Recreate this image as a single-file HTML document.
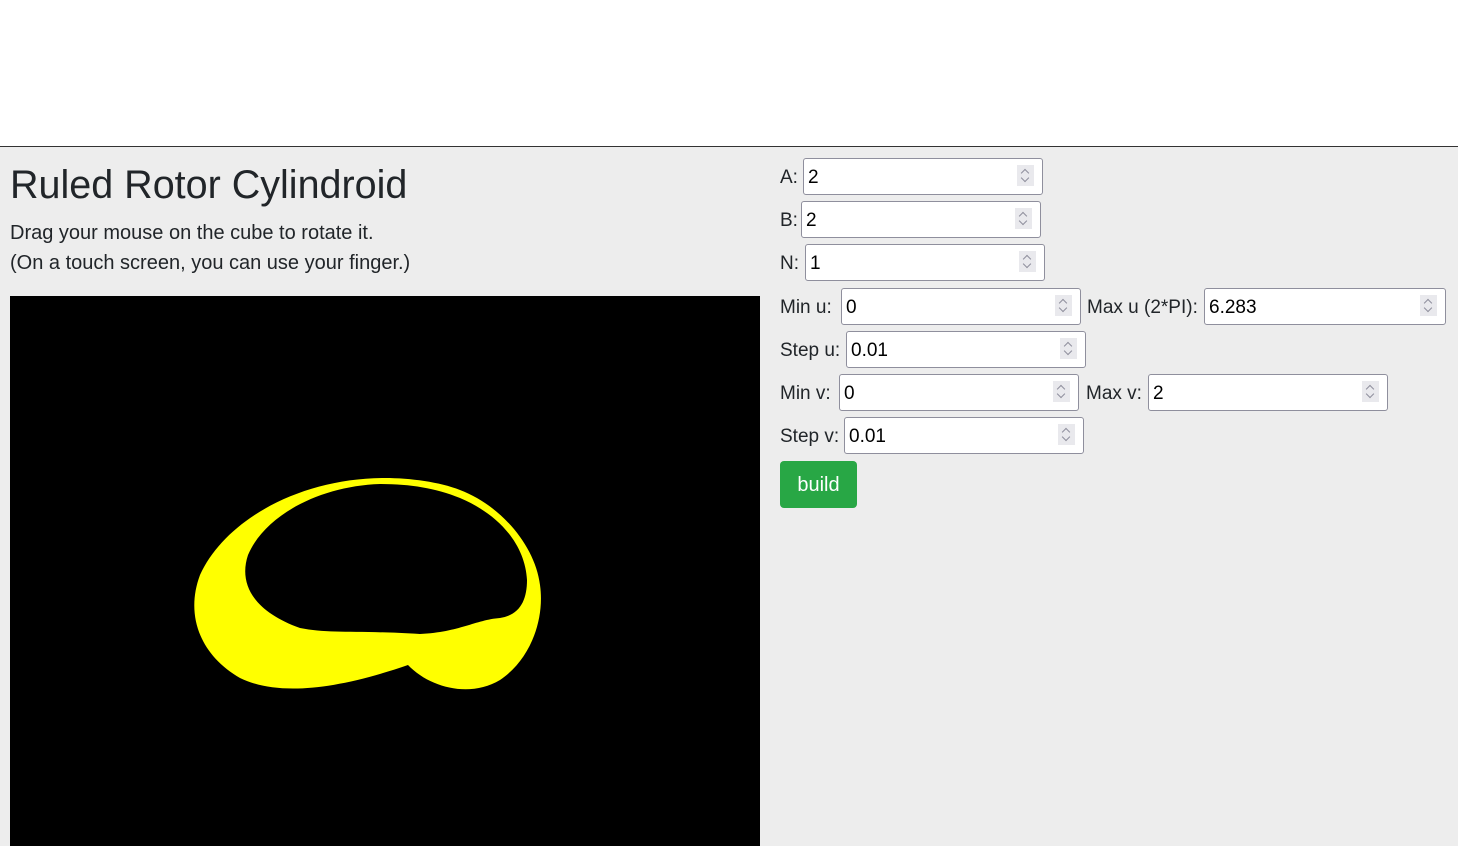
<!DOCTYPE html>
<html><head><meta charset="utf-8"><style>
*{margin:0;padding:0;box-sizing:border-box}
body{width:1458px;height:846px;overflow:hidden;background:#ededed;font-family:"Liberation Sans",sans-serif;color:#212529;position:relative}
.top{position:absolute;left:0;top:0;width:1458px;height:147px;background:#fff;border-bottom:1px solid #333}
.a{position:absolute;white-space:nowrap}
h1{position:absolute;left:10px;top:160px;font-size:39.5px;font-weight:400;line-height:50px}
.p{font-size:20px;line-height:22px}
.lbl{font-size:19px;line-height:22px}
.in{position:absolute;width:240px;height:37px;background:#fff;border:1px solid #8f8f9d;border-radius:3px;font-size:19px;line-height:38px;padding-left:4px;color:#000}
.sp{position:absolute;right:8px;top:6px;width:17px;height:21px;background:#e9e9ed}
.sp:before,.sp:after{content:"";position:absolute;left:5px;width:5px;height:5px;border:solid #8f8f9d;border-width:1.5px 0 0 1.5px;transform:rotate(45deg)}
.sp:before{top:5px}
.sp:after{top:10px;transform:rotate(225deg)}
.btn{position:absolute;left:780px;top:461px;width:77px;height:47px;background:#28a745;border-radius:4px;color:#fff;font-size:20px;line-height:49px;text-align:center}
</style></head><body>
<div class="top"></div>
<h1>Ruled Rotor Cylindroid</h1>
<div class="a p" style="left:10px;top:222px">Drag your mouse on the cube to rotate it.</div>
<div class="a p" style="left:10px;top:252px">(On a touch screen, you can use your finger.)</div>
<svg class="a" style="left:10px;top:296px" width="750" height="550" viewBox="10 296 750 550">
<rect x="10" y="296" width="750" height="550" fill="#000"/>
<path fill="#ff0" fill-rule="evenodd" d="M385 478 C300 478 225 520 200 575 C185 615 200 655 240 678 C275 695 330 692 408 665 C430 688 470 698 500 680 C530 660 545 620 540 585 C535 545 500 505 460 490 C440 482 410 478 385 478 Z
M380 484 C320 486 265 515 248 555 C238 585 255 612 300 628 C330 634 355 630 420 634 C460 632 475 620 500 618 C520 615 527 600 527 580 C525 545 500 515 460 498 C435 488 410 484 380 484 Z"/>
</svg>
<div class="a lbl" style="left:780px;top:167px">A:</div>
<div class="in" style="left:803px;top:158px">2<div class="sp"></div></div>
<div class="a lbl" style="left:780px;top:210px">B:</div>
<div class="in" style="left:801px;top:201px">2<div class="sp"></div></div>
<div class="a lbl" style="left:780px;top:253px">N:</div>
<div class="in" style="left:805px;top:244px">1<div class="sp"></div></div>
<div class="a lbl" style="left:780px;top:297px">Min u:</div>
<div class="in" style="left:841px;top:288px">0<div class="sp"></div></div>
<div class="a lbl" style="left:1087px;top:297px">Max u (2*PI):</div>
<div class="in" style="left:1204px;top:288px;width:242px">6.283<div class="sp"></div></div>
<div class="a lbl" style="left:780px;top:340px">Step u:</div>
<div class="in" style="left:846px;top:331px">0.01<div class="sp"></div></div>
<div class="a lbl" style="left:780px;top:383px">Min v:</div>
<div class="in" style="left:839px;top:374px">0<div class="sp"></div></div>
<div class="a lbl" style="left:1086px;top:383px">Max v:</div>
<div class="in" style="left:1148px;top:374px">2<div class="sp"></div></div>
<div class="a lbl" style="left:780px;top:426px">Step v:</div>
<div class="in" style="left:844px;top:417px">0.01<div class="sp"></div></div>
<div class="btn">build</div>
</body></html>
